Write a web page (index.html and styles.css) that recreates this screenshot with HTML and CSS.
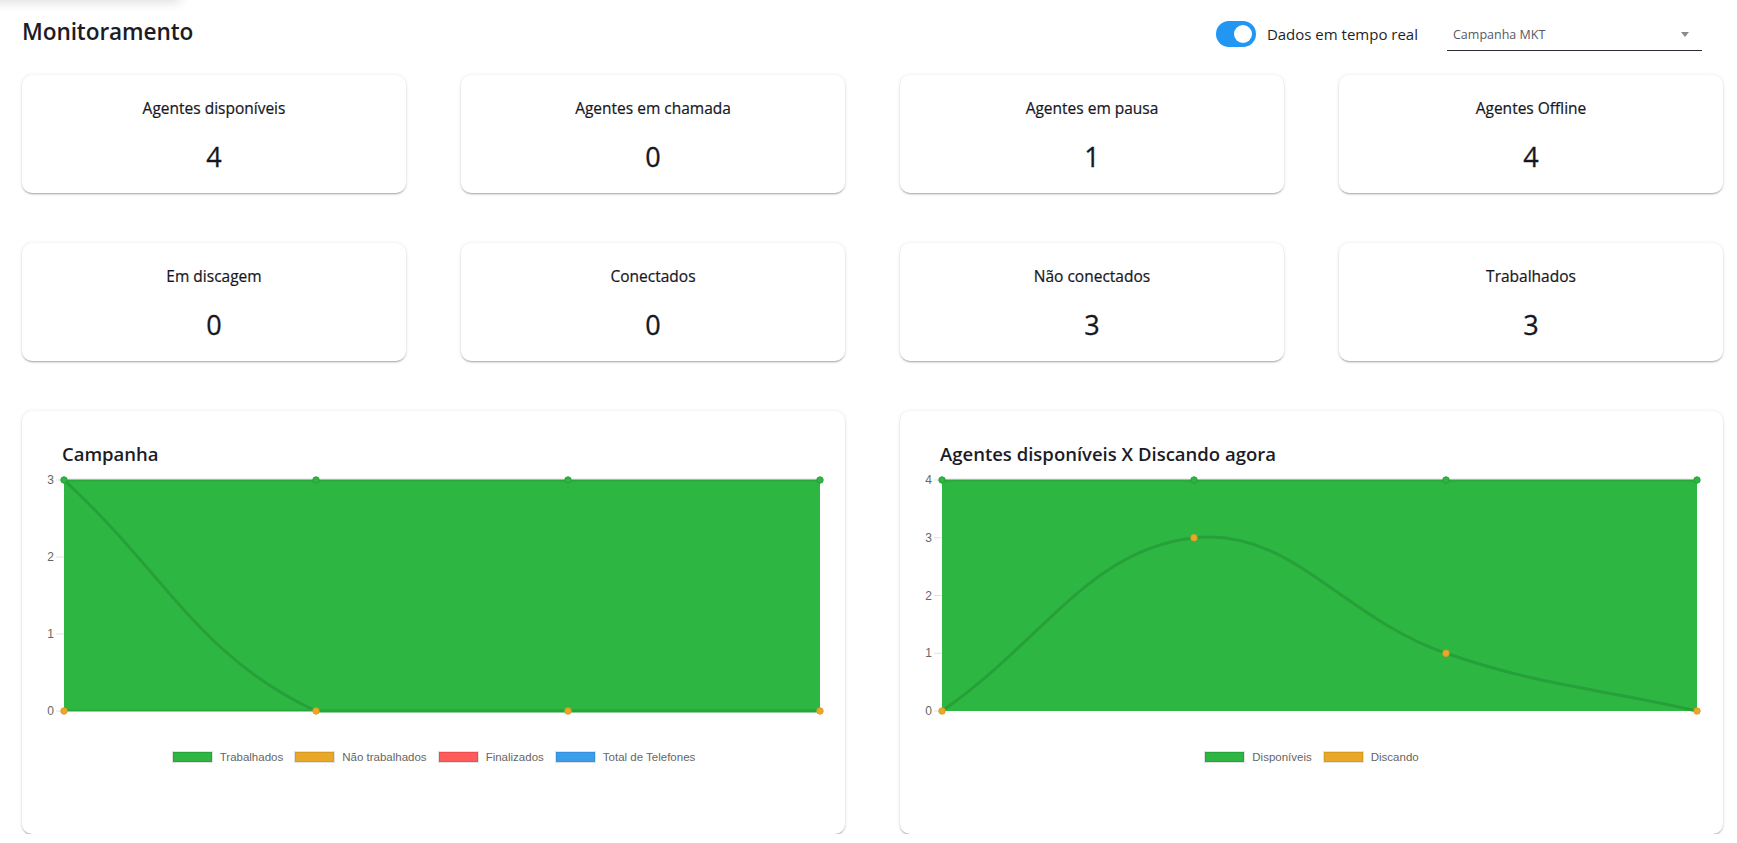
FILE: index.html
```html
<!DOCTYPE html>
<html lang="pt-BR">
<head>
<meta charset="utf-8">
<title>Monitoramento</title>
<link rel="stylesheet" href="styles.css">
</head>
<body>
<div class="ghost-bar"></div>
<main class="page">
  <header class="header">
    <h1 class="title">Monitoramento</h1>
    <div class="controls">
      <label class="switch-wrap">
        <span class="switch"><span class="thumb"></span></span>
        <span class="switch-label">Dados em tempo real</span>
      </label>
      <div class="select">
        <span class="select-value">Campanha MKT</span>
        <span class="select-arrow"></span>
      </div>
    </div>
  </header>

  <section class="stats">
    <div class="card stat"><div class="stat-label">Agentes disponíveis</div><div class="stat-value">4</div></div>
    <div class="card stat"><div class="stat-label">Agentes em chamada</div><div class="stat-value">0</div></div>
    <div class="card stat"><div class="stat-label">Agentes em pausa</div><div class="stat-value">1</div></div>
    <div class="card stat"><div class="stat-label">Agentes Offline</div><div class="stat-value">4</div></div>
    <div class="card stat"><div class="stat-label">Em discagem</div><div class="stat-value">0</div></div>
    <div class="card stat"><div class="stat-label">Conectados</div><div class="stat-value">0</div></div>
    <div class="card stat"><div class="stat-label">Não conectados</div><div class="stat-value">3</div></div>
    <div class="card stat"><div class="stat-label">Trabalhados</div><div class="stat-value">3</div></div>
  </section>

  <section class="charts">
    <div class="card chart-card">
      <h2 class="chart-title">Campanha</h2>
      <svg class="chart" width="823" height="260" viewBox="0 0 823 260">
        <g class="ticks">
          <line x1="34" y1="12" x2="42" y2="12"/>
          <line x1="34" y1="89" x2="42" y2="89"/>
          <line x1="34" y1="166" x2="42" y2="166"/>
          <line x1="34" y1="243" x2="42" y2="243"/>
          <line x1="42" y1="11" x2="798" y2="11"/>
        </g>
        <g class="ylabels">
          <text x="32" y="12">3</text>
          <text x="32" y="89">2</text>
          <text x="32" y="166">1</text>
          <text x="32" y="243">0</text>
        </g>
        <rect class="area" x="42" y="12" width="756" height="231"/>
        <path class="curve" d="M42,12 C142.8,104.4 177.9,189.8 294,243 L798,243"/>
        <line class="edge" x1="42" y1="12.5" x2="798" y2="12.5"/>
        <line class="edge" x1="42" y1="242.5" x2="798" y2="242.5"/>
        <g class="pt-green">
          <circle cx="42" cy="12" r="3.2"/><circle cx="294" cy="12" r="3.2"/><circle cx="546" cy="12" r="3.2"/><circle cx="798" cy="12" r="3.2"/>
        </g>
        <g class="pt-orange">
          <circle cx="42" cy="243" r="3.2"/><circle cx="294" cy="243" r="3.2"/><circle cx="546" cy="243" r="3.2"/><circle cx="798" cy="243" r="3.2"/>
        </g>
      </svg>
      <div class="legend">
        <span class="legend-item"><span class="swatch sw-green"></span>Trabalhados</span>
        <span class="legend-item"><span class="swatch sw-orange"></span>Não trabalhados</span>
        <span class="legend-item"><span class="swatch sw-red"></span>Finalizados</span>
        <span class="legend-item"><span class="swatch sw-blue"></span>Total de Telefones</span>
      </div>
    </div>

    <div class="card chart-card">
      <h2 class="chart-title">Agentes disponíveis X Discando agora</h2>
      <svg class="chart" width="823" height="260" viewBox="0 0 823 260">
        <g class="ticks">
          <line x1="34" y1="12" x2="42" y2="12"/>
          <line x1="34" y1="69.75" x2="42" y2="69.75"/>
          <line x1="34" y1="127.5" x2="42" y2="127.5"/>
          <line x1="34" y1="185.25" x2="42" y2="185.25"/>
          <line x1="34" y1="243" x2="42" y2="243"/>
          <line x1="42" y1="11" x2="797" y2="11"/>
        </g>
        <g class="ylabels">
          <text x="32" y="12">4</text>
          <text x="32" y="69.75">3</text>
          <text x="32" y="127.5">2</text>
          <text x="32" y="185.25">1</text>
          <text x="32" y="243">0</text>
        </g>
        <rect class="area" x="42" y="12" width="755" height="231"/>
        <path class="curve" d="M42,243 C142.8,173.7 188.3,81.9 294,69.75 C389.9,58.8 441.7,149.4 546,185.25 C643.3,218.7 697.2,219.9 797,243"/>
        <line class="edge" x1="42" y1="12.5" x2="797" y2="12.5"/>
        <g class="pt-green">
          <circle cx="42" cy="12" r="3.2"/><circle cx="294" cy="12" r="3.2"/><circle cx="546" cy="12" r="3.2"/><circle cx="797" cy="12" r="3.2"/>
        </g>
        <g class="pt-orange">
          <circle cx="42" cy="243" r="3.2"/><circle cx="294" cy="69.75" r="3.2"/><circle cx="546" cy="185.25" r="3.2"/><circle cx="797" cy="243" r="3.2"/>
        </g>
      </svg>
      <div class="legend">
        <span class="legend-item"><span class="swatch sw-green"></span>Disponíveis</span>
        <span class="legend-item"><span class="swatch sw-orange"></span>Discando</span>
      </div>
    </div>
  </section>
</main>
</body>
</html>
```

FILE: styles.css
```css
* { box-sizing: border-box; }

html, body {
  margin: 0;
  padding: 0;
  background: #ffffff;
}

body {
  font-family: "Open Sans", "Noto Sans", sans-serif;
  color: #1c1c24;
  overflow: hidden;
}

.ghost-bar {
  position: absolute;
  top: -30px;
  left: -20px;
  width: 200px;
  height: 30px;
  background: #fff;
  box-shadow: 0 2px 12px rgba(0, 0, 0, 0.14);
}

.page {
  padding: 0 14px 0 22px;
}

/* Header */
.header {
  height: 62px;
  display: flex;
  align-items: center;
  justify-content: space-between;
}

.title {
  margin: 0;
  font-size: 22.6px;
  font-weight: 600;
  letter-spacing: -0.1px;
  color: #1c1c26;
}

.controls {
  display: flex;
  align-items: center;
  margin-right: 21px;
  padding-top: 6px;
}

.switch-wrap {
  display: flex;
  align-items: center;
  gap: 11px;
}

.switch {
  position: relative;
  width: 40px;
  height: 26px;
  border-radius: 13px;
  background: #2196f3;
}

.thumb {
  position: absolute;
  top: 4px;
  right: 4px;
  width: 18px;
  height: 18px;
  border-radius: 50%;
  background: #ffffff;
}

.switch-label {
  font-size: 15px;
  color: #1e1e28;
}

.select {
  margin-left: 29px;
  width: 255px;
  height: 34px;
  display: flex;
  align-items: center;
  justify-content: space-between;
  padding: 2px 13px 0 6px;
  border-bottom: 1.5px solid #2b2b33;
}

.select-value {
  font-size: 12.5px;
  color: #555a66;
}

.select-arrow {
  width: 0;
  height: 0;
  border-left: 4px solid transparent;
  border-right: 4px solid transparent;
  border-top: 5px solid #8a8a8a;
}

/* Cards */
.card {
  background: #ffffff;
  border-radius: 10px;
  box-shadow: 0 2px 2px -1px rgba(0, 0, 0, 0.22), 0 1px 2px 0 rgba(0, 0, 0, 0.14), 0 0 4px 0 rgba(0, 0, 0, 0.08);
}

.stats {
  margin-top: 13px;
  display: grid;
  grid-template-columns: repeat(4, 1fr);
  column-gap: 55px;
  row-gap: 50px;
}

.stat {
  height: 118px;
  display: flex;
  flex-direction: column;
  align-items: center;
  padding-top: 22px;
}

.stat-label {
  font-size: 15.5px;
  line-height: 22px;
  color: #16161e;
  -webkit-text-stroke: 0.2px #16161e;
}

.stat-value {
  margin-top: 20px;
  font-size: 27px;
  line-height: 36px;
  color: #16161e;
  -webkit-text-stroke: 0.3px #16161e;
}

/* Charts */
.charts {
  margin-top: 50px;
  display: grid;
  grid-template-columns: 1fr 1fr;
  column-gap: 55px;
}

.chart-card {
  height: 423px;
  padding-top: 29px;
}

.chart-title {
  margin: 0 0 0 40px;
  font-size: 18.5px;
  line-height: 28px;
  font-weight: 600;
  color: #1c1c26;
}

.chart {
  display: block;
}

.ticks line {
  stroke: rgba(0, 0, 0, 0.12);
  stroke-width: 1;
}

.ylabels text {
  font-family: "Liberation Sans", Arial, sans-serif;
  font-size: 12px;
  fill: #666666;
  text-anchor: end;
  dominant-baseline: central;
}

.area {
  fill: #2db742;
}

.curve {
  fill: none;
  stroke: #27a03a;
  stroke-width: 3;
}

.edge {
  stroke: #28a73d;
  stroke-width: 2;
}

.pt-green circle {
  fill: #2db742;
  stroke: #27a03a;
  stroke-width: 1;
}

.pt-orange circle {
  fill: #eaa82a;
  stroke: #e39c1c;
  stroke-width: 1;
}

.legend {
  margin-top: 22px;
  display: flex;
  justify-content: center;
  gap: 11px;
  font-family: "Liberation Sans", Arial, sans-serif;
  font-size: 11.5px;
  line-height: 14px;
  color: #666666;
}

.legend-item {
  display: flex;
  align-items: center;
  gap: 7px;
}

.swatch {
  width: 41px;
  height: 12px;
  border: 1px solid #e2e2e2;
}

.sw-green { background: #2db742; box-shadow: inset 0 0 0 1px #26a33a; }
.sw-orange { background: #eaa82a; box-shadow: inset 0 0 0 1px #d99a20; }
.sw-red { background: #ff5b5b; box-shadow: inset 0 0 0 1px #f04e4e; }
.sw-blue { background: #3c9de8; box-shadow: inset 0 0 0 1px #3490dc; }
```
